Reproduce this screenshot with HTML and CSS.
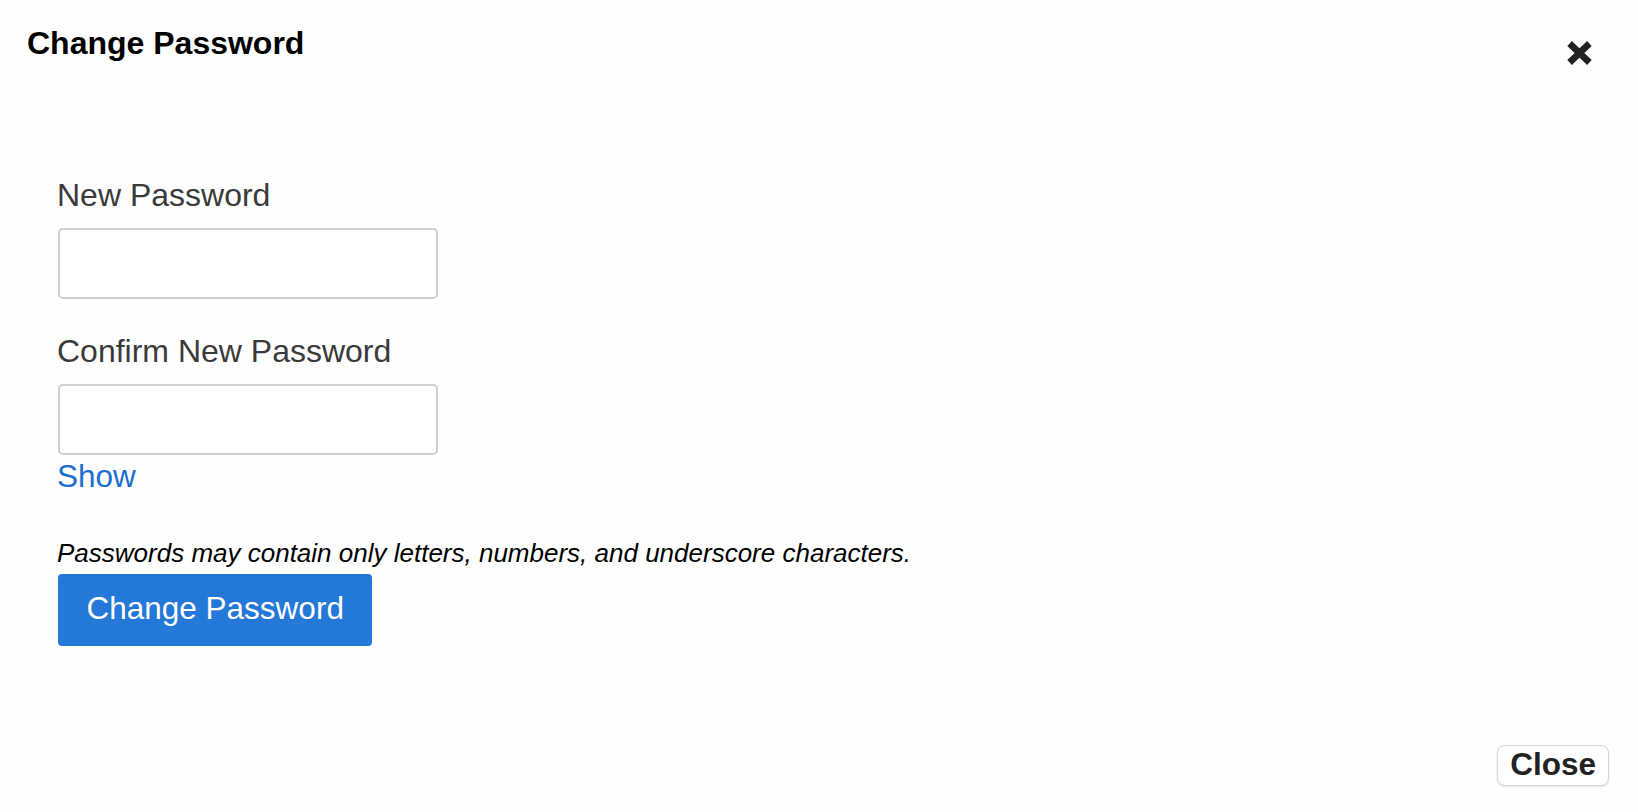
FILE: index.html
```html
<!DOCTYPE html>
<html lang="en">
<head>
<meta charset="utf-8">
<title>Change Password</title>
<link rel="stylesheet" href="styles.css">
</head>
<body>
<div class="modal">
  <header class="modal-header">
    <h1 class="modal-title">Change Password</h1>
    <button class="close-x" type="button" aria-label="Close">
      <svg width="25" height="24" viewBox="0 0 25 24" aria-hidden="true">
        <line x1="2.6" y1="2.5" x2="22.4" y2="21.5" stroke="#222" stroke-width="6.6"/>
        <line x1="22.4" y1="2.5" x2="2.6" y2="21.5" stroke="#222" stroke-width="6.6"/>
      </svg>
    </button>
  </header>
  <main class="modal-body">
    <form class="pw-form">
      <label class="field-label" for="pw1">New Password</label>
      <input class="field-input gap-after" id="pw1" type="password">
      <label class="field-label" for="pw2">Confirm New Password</label>
      <input class="field-input" id="pw2" type="password">
      <a class="show-link" href="#">Show</a>
      <p class="hint">Passwords may contain only letters, numbers, and underscore characters.</p>
      <button class="btn-primary" type="button">Change Password</button>
    </form>
  </main>
  <footer class="modal-footer">
    <button class="btn-close" type="button">Close</button>
  </footer>
</div>
</body>
</html>
```
FILE: styles.css
```css
* {
  box-sizing: border-box;
}

html, body {
  margin: 0;
  padding: 0;
  background: #fefefe;
}

body {
  font-family: "Liberation Sans", Arial, Helvetica, sans-serif;
  font-size: 31.5px;
  color: #333;
}

.modal {
  min-height: 100vh;
  display: flex;
  flex-direction: column;
}

.modal-header {
  display: flex;
  justify-content: space-between;
  align-items: flex-start;
  padding: 25px 46px 0 27px;
}

.modal-title {
  margin: 0;
  font-size: 32px;
  line-height: 36px;
  font-weight: 700;
  color: #000;
}

.close-x {
  margin-top: 16px;
  padding: 0;
  border: 0;
  background: none;
  cursor: pointer;
}

.close-x svg {
  display: block;
}

.modal-body {
  padding: 112px 0 0 57px;
}

.pw-form {
  display: flex;
  flex-direction: column;
  align-items: flex-start;
}

.field-label {
  display: block;
  font-size: 32px;
  line-height: 36px;
  color: #3a3a3a;
  margin-bottom: 15px;
}

.field-input {
  width: 380px;
  height: 71px;
  margin-left: 1px;
  border: 2px solid #cfcfcf;
  border-radius: 5px;
  background: #fff;
  font: inherit;
  padding: 0 12px;
}

.gap-after {
  margin-bottom: 34px;
}

.show-link {
  margin-top: 3px;
  line-height: 36px;
  color: #1b6fcf;
  text-decoration: none;
}

.hint {
  margin: 44px 0 0;
  font-size: 26px;
  line-height: 30px;
  font-style: italic;
  color: #000;
}

.btn-primary {
  margin-top: 6px;
  margin-left: 1px;
  font: inherit;
  font-size: 31.5px;
  line-height: 36px;
  padding: 16px 28.5px 20px;
  border: 0;
  border-radius: 4px;
  background: #2478d8;
  color: #fff;
  cursor: pointer;
}

.modal-footer {
  margin-top: auto;
  display: flex;
  justify-content: flex-end;
  padding: 0 29px 26px;
}

.btn-close {
  font: inherit;
  font-size: 31.5px;
  font-weight: 700;
  line-height: 34px;
  padding: 1px 12px 4px;
  border: 1px solid #d6d6d6;
  border-radius: 8px;
  background: #fff;
  color: #222;
  box-shadow: 0 1px 2px rgba(0, 0, 0, 0.12);
  cursor: pointer;
}
```
